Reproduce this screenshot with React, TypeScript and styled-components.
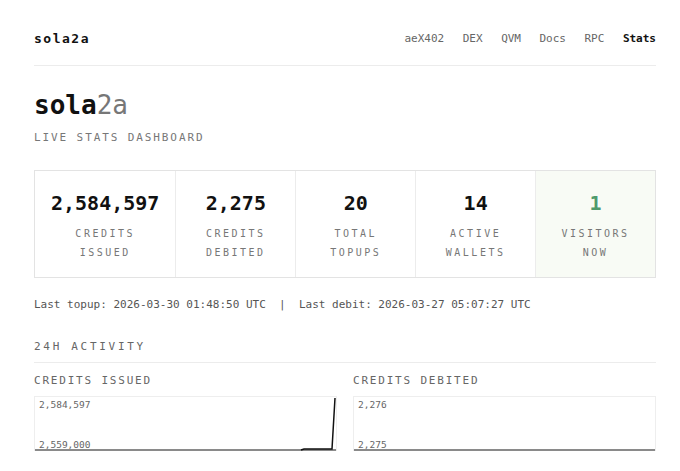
import React from 'react';
import styled, { createGlobalStyle } from 'styled-components';

const GlobalStyle = createGlobalStyle`
  html, body {
    margin: 0;
    padding: 0;
    background: #ffffff;
  }
  body {
    font-family: 'DejaVu Sans Mono', 'Liberation Mono', monospace;
    color: #111111;
  }
`;

const Page = styled.div`
  width: 622px;
  margin-left: 34px;
`;

const Header = styled.header`
  display: flex;
  align-items: center;
  justify-content: space-between;
  padding: 30px 0 17px;
  border-bottom: 1px solid #ececec;
`;

const Brand = styled.div`
  font-size: 13px;
  font-weight: 700;
  letter-spacing: 1.5px;
  line-height: 18px;
`;

const Nav = styled.nav`
  display: flex;
  gap: 18.5px;
`;

const NavLink = styled.a<{ $active?: boolean }>`
  font-size: 11px;
  line-height: 18px;
  color: ${(p) => (p.$active ? '#111111' : '#666666')};
  font-weight: ${(p) => (p.$active ? 700 : 400)};
  text-decoration: none;
`;

const Title = styled.h1`
  margin: 24px 0 0;
  font-size: 26px;
  line-height: 31px;
  font-weight: 700;
  span {
    font-weight: 400;
    color: #777777;
  }
`;

const Subtitle = styled.div`
  margin-top: 9px;
  font-size: 11px;
  line-height: 16px;
  letter-spacing: 1.9px;
  color: #777777;
`;

const StatsRow = styled.div`
  display: flex;
  margin-top: 24px;
  border: 1px solid #e3e3e3;
`;

const StatCell = styled.div<{ $live?: boolean }>`
  flex: 1;
  padding: 20px 16px 15px;
  text-align: center;
  background: ${(p) => (p.$live ? '#f8fbf5' : '#ffffff')};
  & + & {
    border-left: 1px solid #ececec;
  }
`;

const StatValue = styled.div<{ $live?: boolean }>`
  font-size: 20px;
  line-height: 24px;
  font-weight: 700;
  white-space: nowrap;
  color: ${(p) => (p.$live ? '#4f9a6c' : '#111111')};
`;

const StatLabel = styled.div`
  margin-top: 9px;
  font-size: 10px;
  line-height: 19px;
  letter-spacing: 2.5px;
  color: #777777;
`;

const LastLine = styled.div`
  margin-top: 19px;
  font-size: 11px;
  line-height: 16px;
  color: #555555;
  white-space: pre;
`;

const SectionTitle = styled.div`
  margin-top: 26px;
  padding-bottom: 7px;
  border-bottom: 1px solid #ececec;
  font-size: 11px;
  line-height: 16px;
  letter-spacing: 2.7px;
  color: #666666;
`;

const Charts = styled.div`
  display: grid;
  grid-template-columns: 303px 303px;
  gap: 16px;
  margin-top: 10px;
`;

const ChartLabel = styled.div`
  font-size: 11px;
  line-height: 16px;
  letter-spacing: 1.8px;
  color: #666666;
`;

const ChartBox = styled.div`
  position: relative;
  margin-top: 7px;
  height: 54px;
  border: 1px solid #eeeeee;
  border-bottom: none;
  svg {
    display: block;
  }
`;

const AxisText = styled.span<{ $bottom?: boolean }>`
  position: absolute;
  left: 4px;
  ${(p) => (p.$bottom ? 'bottom: 0;' : 'top: 2px;')}
  font-size: 9.5px;
  line-height: 12px;
  color: #666666;
`;

const stats = [
  { value: '2,584,597', label: ['CREDITS', 'ISSUED'] },
  { value: '2,275', label: ['CREDITS', 'DEBITED'] },
  { value: '20', label: ['TOTAL', 'TOPUPS'] },
  { value: '14', label: ['ACTIVE', 'WALLETS'] },
  { value: '1', label: ['VISITORS', 'NOW'], live: true },
];

function IssuedChart() {
  return (
    <svg width="301" height="54" viewBox="0 0 301 54">
      <line x1="0" y1="53" x2="301" y2="53" stroke="#8a8a8a" strokeWidth="2" />
      <polyline
        points="266,53 269,52 297,52 300,1"
        fill="none"
        stroke="#111111"
        strokeWidth="1.5"
      />
    </svg>
  );
}

function DebitedChart() {
  return (
    <svg width="301" height="54" viewBox="0 0 301 54">
      <line x1="0" y1="53" x2="301" y2="53" stroke="#8a8a8a" strokeWidth="2" />
    </svg>
  );
}

export default function App() {
  return (
    <>
      <GlobalStyle />
      <Page>
        <Header>
          <Brand>sola2a</Brand>
          <Nav>
            <NavLink>aeX402</NavLink>
            <NavLink>DEX</NavLink>
            <NavLink>QVM</NavLink>
            <NavLink>Docs</NavLink>
            <NavLink>RPC</NavLink>
            <NavLink $active>Stats</NavLink>
          </Nav>
        </Header>

        <Title>
          sola<span>2a</span>
        </Title>
        <Subtitle>LIVE STATS DASHBOARD</Subtitle>

        <StatsRow>
          {stats.map((s) => (
            <StatCell key={s.value + s.label[1]} $live={s.live}>
              <StatValue $live={s.live}>{s.value}</StatValue>
              <StatLabel>
                {s.label[0]}
                <br />
                {s.label[1]}
              </StatLabel>
            </StatCell>
          ))}
        </StatsRow>

        <LastLine>
          {'Last topup: 2026-03-30 01:48:50 UTC  |  Last debit: 2026-03-27 05:07:27 UTC'}
        </LastLine>

        <SectionTitle>24H ACTIVITY</SectionTitle>

        <Charts>
          <div>
            <ChartLabel>CREDITS ISSUED</ChartLabel>
            <ChartBox>
              <IssuedChart />
              <AxisText>2,584,597</AxisText>
              <AxisText $bottom>2,559,000</AxisText>
            </ChartBox>
          </div>
          <div>
            <ChartLabel>CREDITS DEBITED</ChartLabel>
            <ChartBox>
              <DebitedChart />
              <AxisText>2,276</AxisText>
              <AxisText $bottom>2,275</AxisText>
            </ChartBox>
          </div>
        </Charts>
      </Page>
    </>
  );
}
